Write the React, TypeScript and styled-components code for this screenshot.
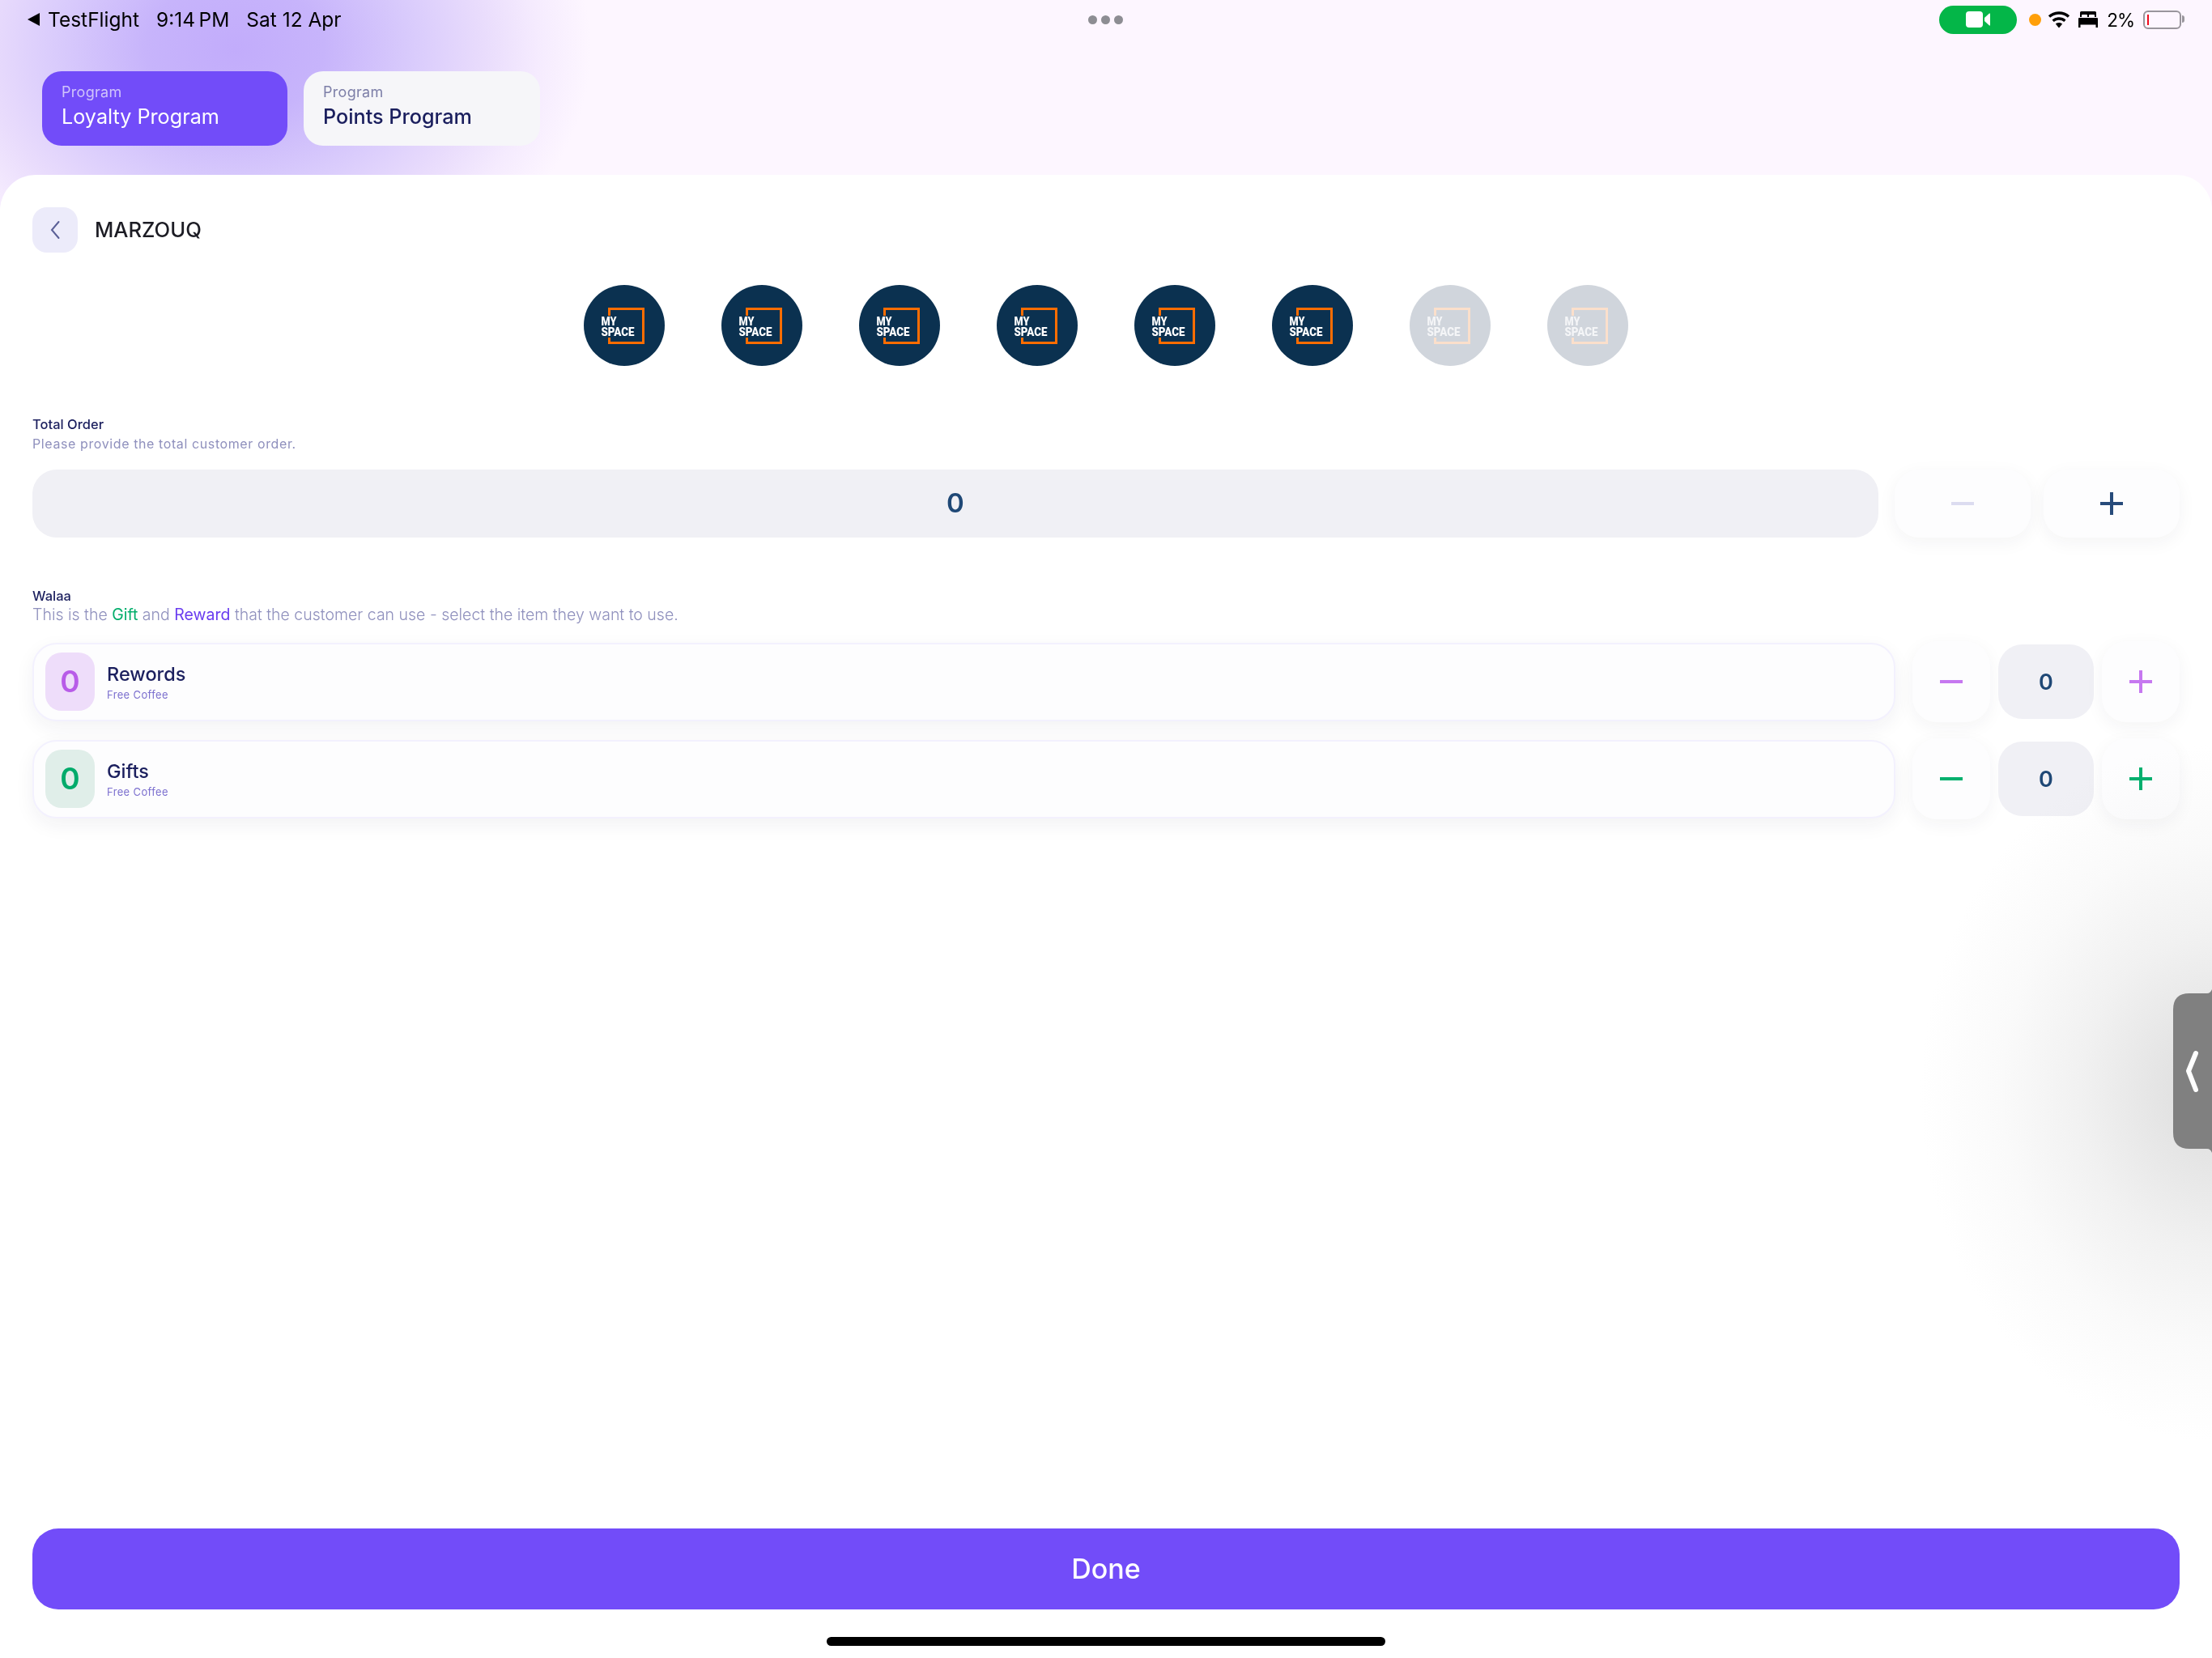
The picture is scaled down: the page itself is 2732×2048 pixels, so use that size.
import React from "react";
import styled, { createGlobalStyle } from "styled-components";

const Global = createGlobalStyle`
  html, body { margin: 0; padding: 0; background: #fff; }
  * { box-sizing: border-box; }
`;

const FONT = `Inter, "Noto Sans", sans-serif`;

const Page = styled.div`
  position: relative;
  width: 2732px;
  height: 2048px;
  overflow: hidden;
  display: flex;
  flex-direction: column;
  font-family: ${FONT};
  background:
    radial-gradient(ellipse 440px 340px at 290px 60px, #c2acfb 0%, #c7b4fb 25%, #d9cbfc 50%, #e9dcfc 70%, #f5ebfe 85%, #fdf6ff 100%),
    #fdf6ff;
`;

const StatusBar = styled.div`
  height: 48px;
  padding: 0 35px 0 34px;
  display: grid;
  grid-template-columns: 1fr auto 1fr;
  align-items: center;
  font-size: 24.5px;
  color: #000;
`;

const StatusLeft = styled.div`
  display: flex;
  align-items: center;
  gap: 21px;
`;

const BackApp = styled.span`
  display: flex;
  align-items: center;
  gap: 10px;
`;

const Dots = styled.div`
  display: flex;
  gap: 5px;
`;

const Dot = styled.i`
  width: 11px;
  height: 11px;
  border-radius: 50%;
  background: #8d8d93;
`;

const StatusRight = styled.div`
  display: flex;
  align-items: center;
  justify-content: flex-end;
`;

const CallPill = styled.div`
  width: 96px;
  height: 35px;
  border-radius: 18px;
  background: #04b648;
  display: flex;
  align-items: center;
  justify-content: center;
  margin-right: 15px;
`;

const OrangeDot = styled.i`
  width: 15px;
  height: 15px;
  border-radius: 50%;
  background: #ff9f0a;
  margin-right: 8px;
`;

const BedIcon = styled.svg`
  margin-left: 10px;
`;

const Percent = styled.span`
  margin: 0 11px 0 11px;
  font-size: 22.5px;
  letter-spacing: -1px;
`;

const Battery = styled.div`
  position: relative;
  width: 47px;
  height: 23px;
  border: 2px solid #99959c;
  border-radius: 6px;
  padding: 3px;
  margin-right: 3px;
  &::before {
    content: "";
    display: block;
    width: 2px;
    height: 13px;
    background: #f00a1e;
  }
  &::after {
    content: "";
    position: absolute;
    right: -6px;
    top: 4px;
    width: 3px;
    height: 9px;
    border-radius: 0 4px 4px 0;
    background: #99959c;
  }
`;

const ProgramRow = styled.div`
  display: flex;
  gap: 20px;
  padding: 40px 52px 36px;
`;

const ProgramCard = styled.div<{ $active?: boolean; $w: number }>`
  width: ${(p) => p.$w}px;
  height: 92px;
  border-radius: 24px;
  padding: 14px 24px 0;
  background: ${(p) => (p.$active ? "#724cf9" : "#f6f6f9")};
`;

const ProgramLabel = styled.div<{ $active?: boolean }>`
  font-size: 18px;
  line-height: 24px;
  letter-spacing: 0.3px;
  color: ${(p) => (p.$active ? "#d0c4fb" : "#7d7fa8")};
`;

const ProgramName = styled.div<{ $active?: boolean }>`
  font-size: 25.2px;
  line-height: 36px;
  font-weight: ${(p) => (p.$active ? 400 : 500)};
  color: ${(p) => (p.$active ? "#fff" : "#1b1f5e")};
`;

const Sheet = styled.div`
  flex: 1;
  background: #fff;
  border-radius: 44px 44px 0 0;
  padding: 40px 40px 0;
  display: flex;
  flex-direction: column;
`;

const Header = styled.div`
  display: flex;
  align-items: center;
  gap: 21px;
  height: 56px;
`;

const BackButton = styled.div`
  width: 56px;
  height: 56px;
  border-radius: 18px;
  background: #ecebfa;
  display: flex;
  align-items: center;
  justify-content: center;
`;

const Title = styled.div`
  font-size: 25.6px;
  font-weight: 500;
  padding-bottom: 2px;
  color: #1c1c24;
`;

const LogoRow = styled.div`
  display: flex;
  justify-content: center;
  gap: 70px;
  margin-top: 40px;
`;

const SectionHead = styled.div`
  margin-top: 61px;
`;

const SectionTitle = styled.div`
  font-size: 16.5px;
  line-height: 23px;
  font-weight: 500;
  color: #1b1f5e;
`;

const SectionHint = styled.div<{ $wide?: boolean }>`
  font-size: ${(p) => (p.$wide ? 19.5 : 16)}px;
  line-height: ${(p) => (p.$wide ? 22 : 24)}px;
  font-weight: ${(p) => (p.$wide ? 300 : 400)};
  letter-spacing: ${(p) => (p.$wide ? 0 : 0.6)}px;
  color: #8f90bd;
`;

const GiftWord = styled.span`
  color: #00ad6a;
  font-weight: 400;
`;

const RewardWord = styled.span`
  color: #6a3df0;
  font-weight: 400;
`;

const TotalRow = styled.div`
  display: flex;
  margin-top: 20px;
  height: 84px;
`;

const TotalField = styled.div`
  flex: 1;
  margin-right: 20px;
  padding-bottom: 2px;
  border-radius: 30px;
  background: #f0f0f5;
  display: flex;
  align-items: center;
  justify-content: center;
  font-size: 33px;
  font-weight: 600;
  color: #1f4876;
`;

const StepButton = styled.div<{ $w: number }>`
  width: ${(p) => p.$w}px;
  border-radius: 30px;
  background: #fdfdfe;
  box-shadow: 0 6px 22px rgba(30, 30, 60, 0.05);
  display: flex;
  align-items: center;
  justify-content: center;
`;

const TotalSteps = styled.div`
  display: flex;
  gap: 16px;
`;

const ItemList = styled.div`
  display: flex;
  flex-direction: column;
  gap: 20px;
  margin-top: 22px;
`;

const ItemRow = styled.div`
  display: flex;
  align-items: center;
  height: 100px;
`;

const ItemCard = styled.div`
  flex: 1;
  height: 97px;
  margin-right: 21px;
  border-radius: 30px;
  border: 2px solid #f3f1fe;
  background: #fdfdfe;
  box-shadow: 0 8px 24px rgba(30, 30, 60, 0.06);
  padding: 0 14px;
  display: flex;
  align-items: center;
  gap: 15px;
`;

const Badge = styled.div<{ $bg: string; $fg: string }>`
  width: 61px;
  height: 72px;
  padding-bottom: 2px;
  border-radius: 20px;
  background: ${(p) => p.$bg};
  color: ${(p) => p.$fg};
  display: flex;
  align-items: center;
  justify-content: center;
  font-size: 37px;
  font-weight: 600;
`;

const ItemText = styled.div`
  display: flex;
  flex-direction: column;
  padding-top: 2px;
`;

const ItemName = styled.div`
  font-size: 23.5px;
  line-height: 30px;
  font-weight: 500;
  color: #1b1f5e;
`;

const ItemNote = styled.div`
  font-size: 13px;
  line-height: 20px;
  letter-spacing: 0.35px;
  color: #7c70cf;
`;

const ItemSteps = styled.div`
  display: flex;
  align-items: center;
  gap: 10px;
  height: 100px;
`;

const ItemStep = styled(StepButton)`
  height: 100px;
`;

const ValueBox = styled.div`
  width: 118px;
  height: 92px;
  border-radius: 30px;
  background: #f0f0f5;
  display: flex;
  align-items: center;
  justify-content: center;
  font-size: 27px;
  font-weight: 600;
  color: #1f4876;
`;

const DoneButton = styled.div`
  margin-top: auto;
  height: 100px;
  padding-bottom: 2px;
  border-radius: 32px;
  background: #724cf9;
  color: #fff;
  font-size: 34px;
  font-weight: 500;
  display: flex;
  align-items: center;
  justify-content: center;
`;

const HomeBar = styled.div`
  width: 690px;
  height: 11px;
  border-radius: 6px;
  background: #000;
  margin: 34px auto 15px;
`;

const Glow = styled.div`
  position: absolute;
  right: 0;
  top: 920px;
  width: 360px;
  height: 860px;
  pointer-events: none;
  mix-blend-mode: multiply;
  background: radial-gradient(ellipse 360px 430px at 100% 50%, #d8d8d8 0%, #e3e3e3 15%, #f1f1f1 45%, #fafafa 72%, #ffffff 100%);
`;

const Handle = styled.svg`
  position: absolute;
  right: 0;
  top: 1220px;
`;

const Sign = ({ plus, color }: { plus?: boolean; color: string }) => (
  <svg width="28" height="28" viewBox="0 0 28 28">
    <rect x="0" y="12" width="28" height="4" fill={color} />
    {plus && <rect x="12" y="0" width="4" height="28" fill={color} />}
  </svg>
);

const Logo = ({ dim }: { dim?: boolean }) => {
  const bg = dim ? "#d0d5dc" : "#0b3150";
  const line = dim ? "#fbdfcb" : "#ff6d00";
  const ink = dim ? "#f4f5f7" : "#ffffff";
  return (
    <svg width="100" height="100" viewBox="0 0 100 100">
      <circle cx="50" cy="50" r="50" fill={bg} />
      <path d="M31.5 38V29.5H73.5V71.5H31.5V65" fill="none" stroke={line} strokeWidth="3" />
      <text x="21.5" y="50" fontFamily="Roboto, sans-serif" fontWeight="900" fontSize="14" fill={ink} textLength="19" lengthAdjust="spacingAndGlyphs">MY</text>
      <text x="21.5" y="63" fontFamily="Roboto, sans-serif" fontWeight="900" fontSize="14" fill={ink} textLength="41" lengthAdjust="spacingAndGlyphs">SPACE</text>
    </svg>
  );
};

const items = [
  { name: "Rewords", bg: "#eeddfa", fg: "#b85ce8", sign: "#c678f0" },
  { name: "Gifts", bg: "#e0eee9", fg: "#00ab6b", sign: "#00b06e" },
];

export default function App() {
  return (
    <Page>
      <Global />
      <StatusBar>
        <StatusLeft>
          <BackApp>
            <svg width="15" height="16" viewBox="0 0 15 16"><path d="M15 0V16L0 8Z" fill="#000" /></svg>
            TestFlight
          </BackApp>
          <span>9:14{"\u2009"}PM</span>
          <span>Sat 12 Apr</span>
        </StatusLeft>
        <Dots><Dot /><Dot /><Dot /></Dots>
        <StatusRight>
          <CallPill>
            <svg width="30" height="20" viewBox="0 0 30 20">
              <rect x="0" y="0" width="21" height="20" rx="4" fill="#fff" />
              <path d="M23 8L29 2.5Q30 2 30 3.5V16.5Q30 18 29 17.5L23 12Z" fill="#fff" />
            </svg>
          </CallPill>
          <OrangeDot />
          <svg width="28" height="22" viewBox="0 0 28 22">
            <path d="M14 21.5L9.8 16.6C12.2 14.5 15.8 14.5 18.2 16.6Z" fill="#000" />
            <path d="M6.6 12.8C10.8 9 17.2 9 21.4 12.8" fill="none" stroke="#000" strokeWidth="3.4" />
            <path d="M2 7.6C8.8 1.4 19.2 1.4 26 7.6" fill="none" stroke="#000" strokeWidth="3.4" />
          </svg>
          <BedIcon width="24" height="20" viewBox="0 0 24 20">
            <path d="M2 1.5Q2 0 3.5 0H20.5Q22 0 22 1.5V7H20V5Q20 4 19 4H14Q13 4 13 5V7H11V5Q11 4 10 4H5Q4 4 4 5V7H2Z" fill="#000" />
            <path d="M1 8H23Q24 8 24 9V20H21.5V16.5H2.5V20H0V9Q0 8 1 8Z" fill="#000" />
          </BedIcon>
          <Percent>2%</Percent>
          <Battery />
        </StatusRight>
      </StatusBar>

      <ProgramRow>
        <ProgramCard $active $w={303}>
          <ProgramLabel $active>Program</ProgramLabel>
          <ProgramName $active>Loyalty Program</ProgramName>
        </ProgramCard>
        <ProgramCard $w={292}>
          <ProgramLabel>Program</ProgramLabel>
          <ProgramName>Points Program</ProgramName>
        </ProgramCard>
      </ProgramRow>

      <Sheet>
        <Header>
          <BackButton>
            <svg width="14" height="24" viewBox="0 0 14 24">
              <path d="M11.5 2L3 12L11.5 22" fill="none" stroke="#5a5f96" strokeWidth="2" strokeLinecap="round" />
            </svg>
          </BackButton>
          <Title>MARZOUQ</Title>
        </Header>

        <LogoRow>
          {[0, 1, 2, 3, 4, 5, 6, 7].map((i) => (
            <Logo key={i} dim={i > 5} />
          ))}
        </LogoRow>

        <SectionHead>
          <SectionTitle>Total Order</SectionTitle>
          <SectionHint>Please provide the total customer order.</SectionHint>
        </SectionHead>

        <TotalRow>
          <TotalField>0</TotalField>
          <TotalSteps>
            <StepButton $w={168}><Sign color="#dcdcf0" /></StepButton>
            <StepButton $w={168}><Sign plus color="#274b7a" /></StepButton>
          </TotalSteps>
        </TotalRow>

        <SectionHead>
          <SectionTitle>Walaa</SectionTitle>
          <SectionHint $wide>
            This is the <GiftWord>Gift</GiftWord> and <RewardWord>Reward</RewardWord> that the customer can use - select the item they want to use.
          </SectionHint>
        </SectionHead>

        <ItemList>
          {items.map((it) => (
            <ItemRow key={it.name}>
              <ItemCard>
                <Badge $bg={it.bg} $fg={it.fg}>0</Badge>
                <ItemText>
                  <ItemName>{it.name}</ItemName>
                  <ItemNote>Free Coffee</ItemNote>
                </ItemText>
              </ItemCard>
              <ItemSteps>
                <ItemStep $w={96}><Sign color={it.sign} /></ItemStep>
                <ValueBox>0</ValueBox>
                <ItemStep $w={96}><Sign plus color={it.sign} /></ItemStep>
              </ItemSteps>
            </ItemRow>
          ))}
        </ItemList>

        <DoneButton>Done</DoneButton>
        <HomeBar />
      </Sheet>

      <Glow />
      <Handle width="48" height="206" viewBox="0 0 48 206">
        <path d="M48 0V2Q46 7 42 7H20Q0 7 0 27V179Q0 199 20 199H42Q46 199 48 204V206Z" fill="#808080" />
        <path d="M28 81L19 103L28 126" fill="none" stroke="#fff" strokeWidth="6" strokeLinecap="round" strokeLinejoin="round" />
      </Handle>
    </Page>
  );
}
